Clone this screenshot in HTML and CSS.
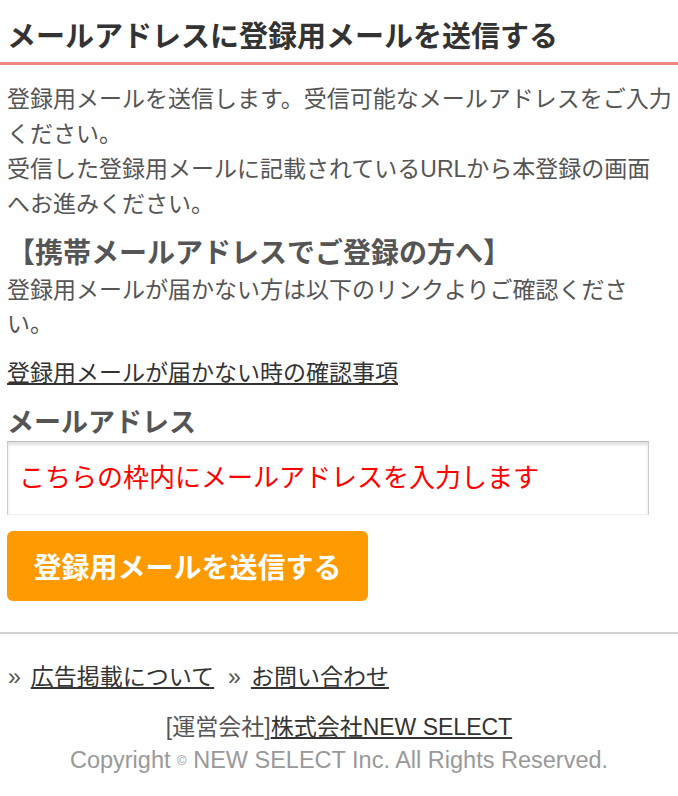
FILE: index.html
```html
<!DOCTYPE html>
<html lang="ja">
<head>
    <meta charset="UTF-8">
    <meta name="viewport" content="width=device-width, initial-scale=1.0">
    <title>メールアドレスに登録用メールを送信する</title>
    <link rel="stylesheet" href="styles.css">
</head>
<body>
    <h1 class="page-title">メールアドレスに登録用メールを送信する</h1>

    <div class="content">
        <p class="lead">登録用メールを送信します。受信可能なメールアドレスをご入力ください。<br>受信した登録用メールに記載されているURLから本登録の画面<br>へお進みください。</p>

        <!-- 携帯メール向け案内 -->
        <h2 class="notice-title">【携帯メールアドレスでご登録の方へ】</h2>
        <p class="notice-text">登録用メールが届かない方は以下のリンクよりご確認ください。</p>
        <p class="notice-link"><a href="#">登録用メールが届かない時の確認事項</a></p>

        <form class="mail-form" onsubmit="return false;">
            <label class="form-label" for="mail">メールアドレス</label>
            <input class="mail-input" type="email" id="mail" placeholder="こちらの枠内にメールアドレスを入力します">
            <button class="send-button" type="submit">登録用メールを送信する</button>
        </form>
    </div>

    <footer class="footer">
        <ul class="footer-links">
            <li><a href="#">広告掲載について</a></li>
            <li><a href="#">お問い合わせ</a></li>
        </ul>
        <p class="company">[運営会社]<a href="#">株式会社NEW SELECT</a></p>
        <p class="copyright">Copyright <span class="copy-mark">©</span> NEW SELECT Inc. All Rights Reserved.</p>
    </footer>
</body>
</html>
```

FILE: styles.css
```css
body {
    font-family: "Liberation Sans", "Noto Sans CJK JP", sans-serif;
    background: #fff;
    color: #555;
    margin: 0;
}
a {
    color: #333;
    text-decoration: underline;
}
.page-title {
    margin: 0;
    padding: 17px 7px 5px;
    font-size: 29px;
    line-height: 40px;
    font-weight: bold;
    color: #333;
    border-bottom: 3px solid #f08585;
}
.content {
    padding: 0 3px 0 7px;
}
.lead {
    margin: 17px 0 0;
    font-size: 23px;
    line-height: 35px;
}
.notice-title {
    margin: 14px 0 0;
    font-size: 28px;
    line-height: 36px;
    font-weight: bold;
    color: #555;
}
.notice-text {
    margin: 1px 0 0;
    max-width: 630px;
    font-size: 23px;
    line-height: 34px;
}
.notice-link {
    margin: 15px 0 0;
    font-size: 23px;
    line-height: 34px;
}
.mail-form {
    margin-top: 15px;
    display: flex;
    flex-direction: column;
    align-items: flex-start;
}
.form-label {
    font-size: 27px;
    line-height: 36px;
    font-weight: bold;
    color: #555;
}
.mail-input {
    box-sizing: border-box;
    width: 642px;
    height: 74px;
    margin-top: 0;
    padding: 0 11px;
    font-family: inherit;
    font-size: 26px;
    border: 1px solid #ccc;
    border-top-color: #bbb;
    border-bottom-color: #eee;
    box-shadow: inset 0 3px 3px rgba(0, 0, 0, 0.12);
    border-radius: 0;
    outline: none;
}
.mail-input::placeholder {
    color: #f00;
    opacity: 1;
}
.send-button {
    margin-top: 16px;
    width: 361px;
    height: 70px;
    font-family: inherit;
    font-size: 28px;
    font-weight: bold;
    color: #fff;
    background: #ff9a00;
    border: none;
    border-radius: 6px;
    cursor: pointer;
}
.footer {
    margin-top: 31px;
    border-top: 2px solid #d0d0d0;
    padding: 26px 0 20px;
}
.footer-links {
    list-style: none;
    margin: 0;
    padding: 0 0 0 8px;
    display: flex;
    gap: 14px;
    font-size: 23px;
    line-height: 35px;
}
.footer-links li::before {
    content: "»";
    margin-right: 10px;
    color: #555;
}
.company {
    margin: 15px 0 0;
    text-align: center;
    font-size: 23px;
    line-height: 35px;
}
.copyright {
    margin: 0;
    text-align: center;
    font-size: 23.5px;
    line-height: 30px;
    color: #999;
}
.copy-mark {
    font-size: 13px;
    vertical-align: 3px;
}
```
